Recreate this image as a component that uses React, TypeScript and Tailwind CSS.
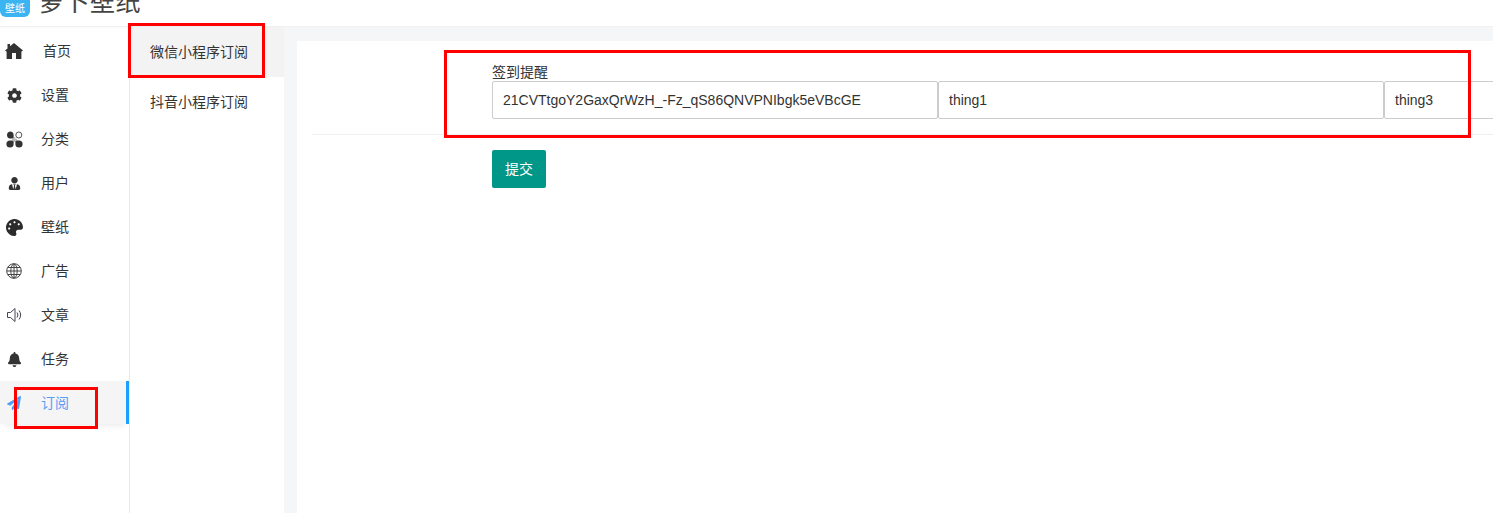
import React from "react";
import { FaCog, FaUserTie, FaPalette, FaBell, FaPaperPlane } from "react-icons/fa";

const font = { fontFamily: '"Liberation Sans","Noto Sans CJK SC",sans-serif' };

function Home() {
  return (
    <svg width="18" height="16" viewBox="0 0 18 16">
      <path d="M9 0L18 7.6 16.400 8.400V16H11V10H7V16H1.600V8.400L0 7.600 2.500 5.400V1H5V3.200z" fill="#333" />
    </svg>
  );
}
function Cat() {
  return (
    <svg width="17" height="17" viewBox="0 0 17 17">
      <path d="M4 .5a3.600 3.600 0 0 1 3.600 3.600v3.500H4A3.600 3.600 0 0 1 4 .5z" fill="#333" />
      <circle cx="12.800" cy="4" r="3" fill="#fff" stroke="#555" strokeWidth="1" />
      <path d="M7.600 9.400V13A3.600 3.600 0 1 1 4 9.400z" fill="#333" />
      <path d="M9.400 9.400H13A3.600 3.600 0 1 1 9.400 13z" fill="#333" />
      <path d="M8.500 6v5M6 8.500h5" stroke="#bbb" strokeWidth="1.500" />
    </svg>
  );
}
function Globe() {
  return (
    <svg width="16" height="16" viewBox="0 0 16 16" fill="none" stroke="#444" strokeWidth="1">
      <circle cx="8" cy="8" r="7.300" />
      <ellipse cx="8" cy="8" rx="3.200" ry="7" />
      <path d="M8 1v14M1 8h14M2 4.500h12M2 11.500h12" />
    </svg>
  );
}
function Speaker() {
  return (
    <svg width="15" height="16" viewBox="0 0 15 16" fill="none" stroke="#445" strokeWidth="1">
      <path d="M.5 5.500h3L8 1.500v13l-4.500-4H.5z" />
      <path d="M10 5.500a4 4 0 0 1 0 5M12 3.500a7 7 0 0 1 0 9" />
    </svg>
  );
}

const items: { label: string; icon: React.ReactNode; active?: boolean }[] = [
  { label: "首页", icon: <Home /> },
  { label: "设置", icon: <FaCog size={15} color="#333" /> },
  { label: "分类", icon: <Cat /> },
  { label: "用户", icon: <FaUserTie size={13} color="#333" /> },
  { label: "壁纸", icon: <FaPalette size={17} color="#2b2b2b" /> },
  { label: "广告", icon: <Globe /> },
  { label: "文章", icon: <Speaker /> },
  { label: "任务", icon: <FaBell size={15} color="#333" /> },
  { label: "订阅", icon: <FaPaperPlane size={14} color="#4a9eff" />, active: true },
];

export default function App() {
  return (
    <div className="relative w-[1493px] h-[513px] overflow-hidden bg-white text-[14px] text-[#333]" style={font}>
      <header className="h-[27px] flex items-start gap-[10px] overflow-hidden border-b border-[#f0f0f0] shadow-[0_1px_2px_rgba(0,0,0,0.03)]">
        <div className="w-[30px] h-[30px] mt-[-13px] shrink-0 rounded-[6px] bg-[#3bb4f2] flex flex-col items-center justify-end pb-[2px] text-white text-[10px] leading-[13px]">
          <span>壁纸</span>
        </div>
        <span className="text-[25px] leading-[30px] mt-[-13px] ml-[-1px] tracking-[0.5px] text-[#444]">萝卜壁纸</span>
      </header>
      <div className="flex h-[486px]">
        <nav className="w-[130px] shrink-0 border-r border-[#e8e8e8] pt-[2px]">
          {items.map((it, i) => (
            <div
              key={it.label}
              className={
                it.active
                  ? "h-[43px] pt-[1px] flex items-center bg-[#f5f5f5] border-r-[3px] border-[#1e9fff] text-[#5a9df5] shadow-[0_6px_6px_-4px_rgba(0,0,0,0.08)]"
                  : "h-[44px] flex items-center"
              }
            >
              <span className="w-[41px] pl-[4px] shrink-0 flex items-center">
                <span className="w-[20px] flex justify-center">{it.icon}</span>
              </span>
              <span className={i === 0 ? "ml-[2px]" : ""}>{it.label}</span>
            </div>
          ))}
        </nav>
        <aside className="w-[154px] shrink-0">
          <div className="h-[50px] bg-[#f3f3f4] flex items-center pl-[20px]">微信小程序订阅</div>
          <div className="h-[50px] flex items-center pl-[20px]">抖音小程序订阅</div>
        </aside>
        <main className="flex-1 min-w-0 bg-[#f5f6f8] pl-[13px] pt-[14px]">
          <div className="h-full bg-white overflow-hidden">
            <div className="h-[94px] ml-[15px] border-b border-[#f0f0f0] pl-[180px] pt-[23px]">
              <div className="leading-[17px]">签到提醒</div>
              <div className="flex">
                {["21CVTtgoY2GaxQrWzH_-Fz_qS86QNVPNIbgk5eVBcGE", "thing1", "thing3"].map((v, i) => (
                  <input
                    key={v}
                    readOnly
                    value={v}
                    className={
                      (i === 2 ? "w-[300px]" : "w-[446px]") +
                      " shrink-0 h-[38px] border border-[#ccc] rounded-[2px] px-[10px] text-[14px] text-[#333] outline-none"
                    }
                  />
                ))}
              </div>
            </div>
            <div className="pl-[195px] pt-[15px]">
              <button className="w-[54px] h-[38px] bg-[#009688] text-white rounded-[2px] text-[14px]">提交</button>
            </div>
          </div>
        </main>
      </div>
      <div className="absolute left-[128px] top-[23px] w-[137px] h-[55px] border-[3px] border-[#ff0000]" />
      <div className="absolute left-[444px] top-[50px] w-[1027px] h-[88px] border-[3px] border-[#ff0000]" />
      <div className="absolute left-[14px] top-[387px] w-[84px] h-[42px] border-[3px] border-[#ff0000]" />
    </div>
  );
}
